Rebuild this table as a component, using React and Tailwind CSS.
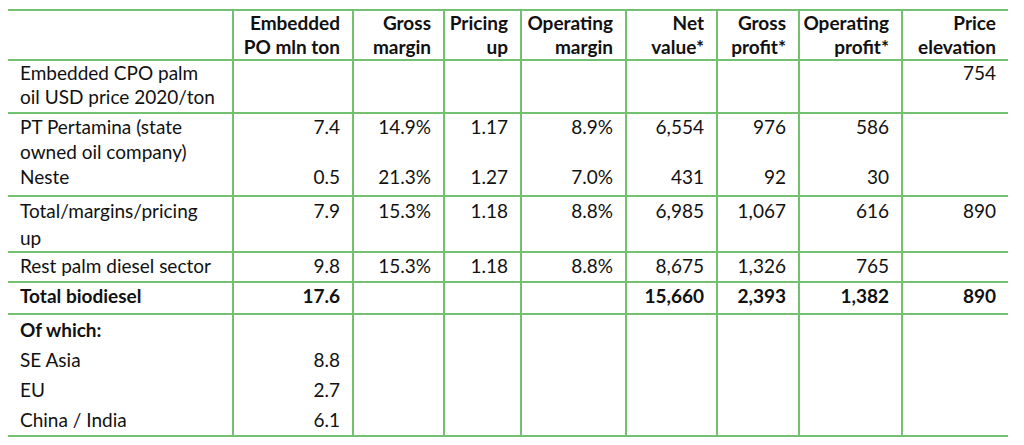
const cols = [225, 120, 91, 77, 105, 91, 82, 103, 106];

const headers = [
    '',
    ['Embedded', 'PO mln ton'],
    ['Gross', 'margin'],
    ['Pricing', 'up'],
    ['Operating', 'margin'],
    ['Net', 'value*'],
    ['Gross', 'profit*'],
    ['Operating', 'profit*'],
    ['Price', 'elevation'],
];

// each row: height, line height, cells as arrays of lines
const rows = [
    {
        h: 'h-[53px]',
        lh: 'leading-[24px]',
        cells: [
            ['Embedded CPO palm', 'oil USD price 2020/ton'],
            [], [], [], [], [], [], [],
            ['754'],
        ],
    },
    {
        h: 'h-[83px]',
        lh: 'leading-[25px]',
        cells: [
            ['PT Pertamina (state', 'owned oil company)', 'Neste'],
            ['7.4', '', '0.5'],
            ['14.9%', '', '21.3%'],
            ['1.17', '', '1.27'],
            ['8.9%', '', '7.0%'],
            ['6,554', '', '431'],
            ['976', '', '92'],
            ['586', '', '30'],
            [],
        ],
    },
    {
        h: 'h-[53px]',
        lh: 'leading-[27px]',
        cells: [
            ['Total/margins/pricing', 'up'],
            ['7.9'], ['15.3%'], ['1.18'], ['8.8%'], ['6,985'], ['1,067'], ['616'], ['890'],
        ],
    },
    {
        h: 'h-[30px]',
        lh: 'leading-[25px]',
        cells: [
            ['Rest palm diesel sector'],
            ['9.8'], ['15.3%'], ['1.18'], ['8.8%'], ['8,675'], ['1,326'], ['765'], [],
        ],
    },
    {
        h: 'h-[32px]',
        lh: 'leading-[26px]',
        bold: true,
        cells: [
            ['Total biodiesel'],
            ['17.6'], [], [], [], ['15,660'], ['2,393'], ['1,382'], ['890'],
        ],
    },
    {
        h: 'h-[122px]',
        lh: 'leading-[30px]',
        cells: [
            [<b key="b">Of which:</b>, 'SE Asia', 'EU', 'China / India'],
            ['', '8.8', '2.7', '6.1'],
            [], [], [], [], [], [], [],
        ],
    },
];

function Cell({ lines, first, last }) {
    return (
        <td
            className={`align-top p-0 border-t-2 border-[#72c070] ${first ? 'pl-3 text-left' : 'pr-3 text-right'} ${last ? '' : 'border-r-2'}`}
        >
            {lines.map((l, i) => (
                <div key={i} className="whitespace-nowrap">{l === '' ? '\u00a0' : l}</div>
            ))}
        </td>
    );
}

export default function App() {
    return (
        <div className="bg-white w-[1024px] h-[445px] pt-[9px] pl-[8px] text-[19px] text-[#111]" style={{ fontFamily: 'Lato, sans-serif' }}>
            <table className="border-collapse table-fixed w-[1000px] border-b-2 border-t-2 border-[#72c070]">
                <colgroup>
                    {cols.map((w, i) => <col key={i} style={{ width: w }} />)}
                </colgroup>
                <thead>
                    <tr className="h-[45px]">
                        {headers.map((h, i) => (
                            <th
                                key={i}
                                className={`align-bottom p-0 pr-3 text-right font-bold leading-[24px] border-[#72c070] ${i === 8 ? '' : 'border-r-2'}`}
                            >
                                {h && h.map((l, j) => <div key={j} className="whitespace-nowrap">{l}</div>)}
                            </th>
                        ))}
                    </tr>
                </thead>
                <tbody>
                    {rows.map((r, ri) => (
                        <tr key={ri} className={`${r.h} ${r.lh} ${r.bold ? 'font-bold' : ''}`}>
                            {r.cells.map((c, ci) => (
                                <Cell key={ci} lines={c} first={ci === 0} last={ci === 8} />
                            ))}
                        </tr>
                    ))}
                </tbody>
            </table>
        </div>
    );
}
